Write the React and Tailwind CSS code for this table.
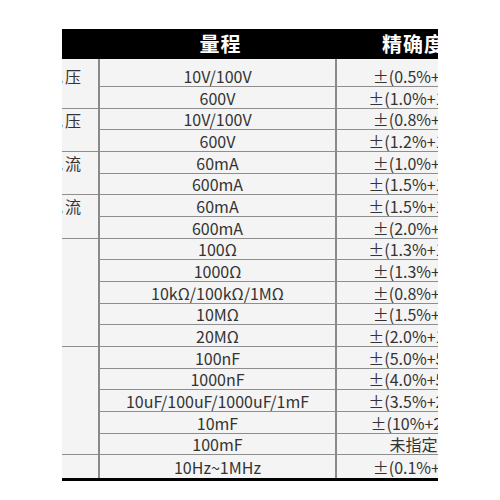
import React from 'react';

const groups = [
  { label: '直流电压', rows: [['10V/100V', '±(0.5%+3)'], ['600V', '±(1.0%+10)']] },
  { label: '交流电压', rows: [['10V/100V', '±(0.8%+3)'], ['600V', '±(1.2%+10)']] },
  { label: '直流电流', rows: [['60mA', '±(1.0%+3)'], ['600mA', '±(1.5%+10)']] },
  { label: '交流电流', rows: [['60mA', '±(1.5%+10)'], ['600mA', '±(2.0%+5)']] },
  {
    label: '电阻',
    rows: [
      ['100Ω', '±(1.3%+10)'],
      ['1000Ω', '±(1.3%+3)'],
      ['10kΩ/100kΩ/1MΩ', '±(0.8%+3)'],
      ['10MΩ', '±(1.5%+3)'],
      ['20MΩ', '±(2.0%+10)'],
    ],
  },
  {
    label: '电容',
    rows: [
      ['100nF', '±(5.0%+50)'],
      ['1000nF', '±(4.0%+50)'],
      ['10uF/100uF/1000uF/1mF', '±(3.5%+20)'],
      ['10mF', '±(10%+20)'],
      ['100mF', '未指定'],
    ],
  },
  { label: '频率', rows: [['10Hz~1MHz', '±(0.1%+3)']] },
];

const spans = { 1: 'row-span-1', 2: 'row-span-2', 5: 'row-span-5' };

export default function App() {
  let rowIndex = 0;
  const cells = [];

  groups.forEach((g, gi) => {
    const firstRow = rowIndex === 0;
    cells.push(
      <div
        key={'l' + gi}
        className={`${spans[g.rows.length]} col-start-1 overflow-hidden ${firstRow ? '' : 'border-t border-[#8e8e8e]'}`}
      >
        <div className={`flex justify-end items-center pr-[15px] ${firstRow ? 'h-[27px] pt-[6px]' : 'h-[21px] pt-[1px]'}`}>
          <div className="w-[72px] shrink-0 text-left whitespace-nowrap tracking-[2px]">{g.label}</div>
        </div>
      </div>
    );
    g.rows.forEach(([range, acc]) => {
      const top = rowIndex === 0;
      const line = top ? '' : 'border-t border-t-[#8e8e8e]';
      const pad = top ? 'pt-[6px]' : 'pt-[1px]';
      cells.push(
        <div
          key={'r' + rowIndex}
          className={`col-start-2 flex items-center justify-center whitespace-nowrap border-l-2 border-l-[#8a8a8a] ${line} ${pad}`}
        >
          {range}
        </div>,
        <div
          key={'a' + rowIndex}
          className={`col-start-3 flex items-center justify-center whitespace-nowrap border-l-2 border-l-[#8a8a8a] ${line} ${pad}`}
        >
          {acc}
        </div>
      );
      rowIndex += 1;
    });
  });

  return (
    <div className="w-[500px] h-[500px] bg-white pt-[29px] pl-[62px]" style={{ fontFamily: '"Noto Sans CJK SC", "Noto Sans", sans-serif' }}>
      <div className="w-[376px] overflow-hidden">
        <div className="w-[428px]">
          <div className="h-[30px] bg-black grid grid-cols-[36px_237px_155px] text-white font-bold text-[20px] tracking-[1px]">
            <div />
            <div className="flex items-center justify-center pl-[8px]">量程</div>
            <div className="flex items-center justify-center pl-[2px]">精确度</div>
          </div>
          <div className="grid grid-cols-[36px_237px_155px] grid-rows-[27px_repeat(17,21.67px)_24px] bg-[#f4f4f4] text-[16px] text-[#333333] border-b-[3px] border-b-black">
            {cells}
          </div>
        </div>
      </div>
    </div>
  );
}
